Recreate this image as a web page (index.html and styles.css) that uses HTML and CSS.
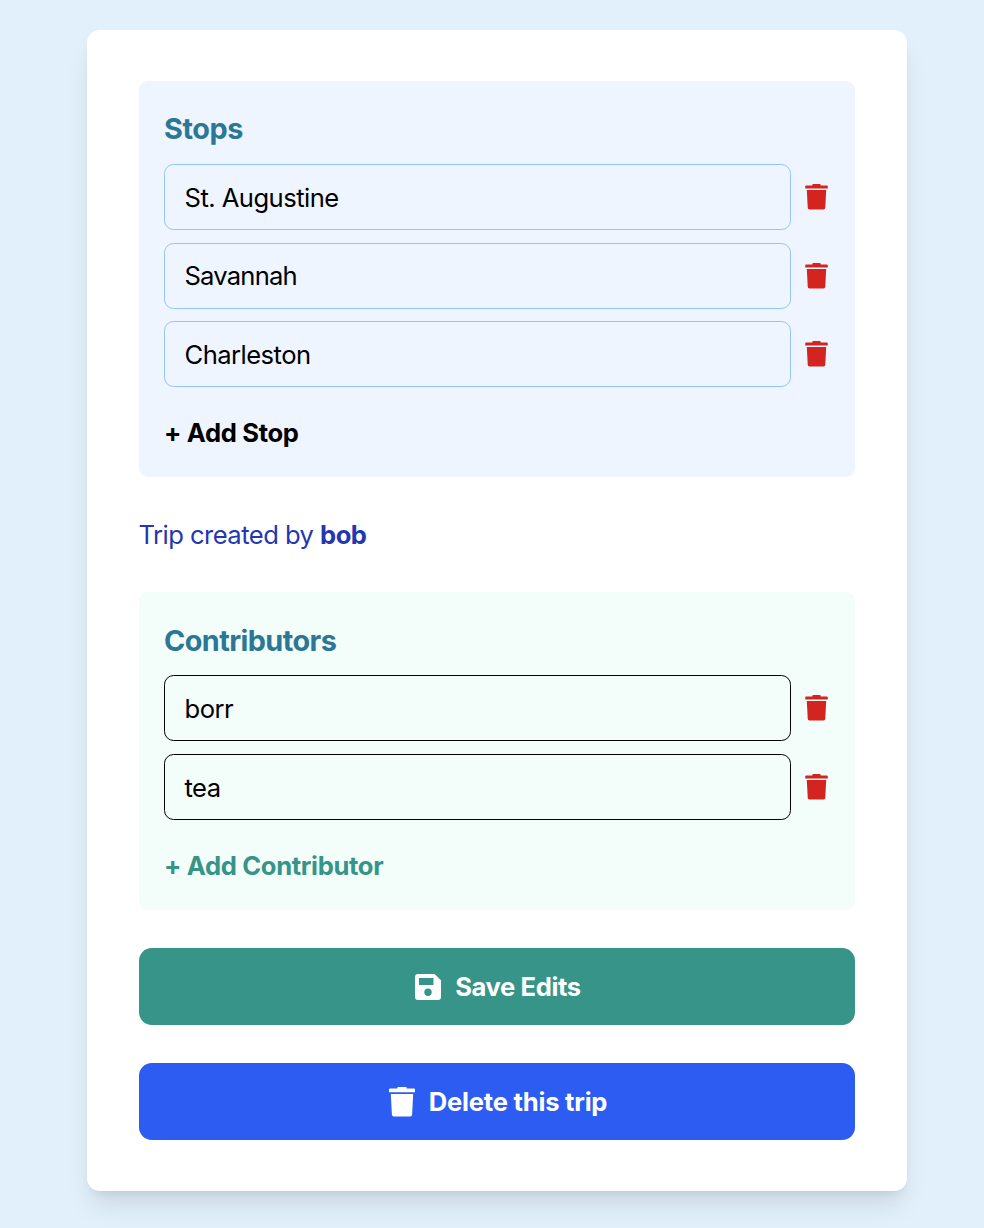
FILE: index.html
```html
<!DOCTYPE html>
<html lang="en">
<head>
<meta charset="utf-8">
<title>Edit trip</title>
<link rel="stylesheet" href="styles.css">
</head>
<body>
<svg class="sprite" aria-hidden="true">
  <symbol id="trash" viewBox="0 0 26 30">
    <path d="M9 0H17Q17.8 0 17.8 1.6H25Q26 1.6 26 2.6V5.2H0V2.6Q0 1.6 1 1.6H8.2Q8.2 0 9 0ZM1.8 6.9H24.2L23.1 27.7Q22.9 29.4 21.2 29.4H4.8Q3.1 29.4 2.9 27.7Z"/>
  </symbol>
  <symbol id="save" viewBox="0 0 26 26">
    <path fill-rule="evenodd" d="M3 0H19.5L26 6.3V23A3 3 0 0 1 23 26H3A3 3 0 0 1 0 23V3A3 3 0 0 1 3 0ZM4 4V11H18.5V4ZM13 14.5A3.7 3.7 0 1 0 13 21.9A3.7 3.7 0 1 0 13 14.5Z"/>
  </symbol>
</svg>
<main class="card">
  <section class="panel stops">
    <h2>Stops</h2>
    <div class="row"><div class="field">St. Augustine</div><svg class="remove"><use href="#trash"/></svg></div>
    <div class="row"><div class="field tight">Savannah</div><svg class="remove"><use href="#trash"/></svg></div>
    <div class="row"><div class="field">Charleston</div><svg class="remove"><use href="#trash"/></svg></div>
    <div class="add"><span>+ Add Stop</span></div>
  </section>
  <p class="creator"><span>Trip created by <b>bob</b></span></p>
  <section class="panel people">
    <h2>Contributors</h2>
    <div class="row"><div class="field">borr</div><svg class="remove"><use href="#trash"/></svg></div>
    <div class="row"><div class="field">tea</div><svg class="remove"><use href="#trash"/></svg></div>
    <div class="add"><span>+ Add Contributor</span></div>
  </section>
  <div class="button save"><svg class="save-icon"><use href="#save"/></svg><span>Save Edits</span></div>
  <div class="button delete"><svg class="delete-icon"><use href="#trash"/></svg><span>Delete this trip</span></div>
</main>
</body>
</html>
```
FILE: styles.css
```css
* { box-sizing: border-box; }
body {
  margin: 0;
  padding: 30px 77px 37px 87px;
  height: 1228px;
  overflow: hidden;
  background: #e2f0fb;
  font-family: Inter, sans-serif;
  font-size: 25.6px;
  line-height: 38.4px;
  letter-spacing: -0.54px;
  color: #000;
}
.sprite { display: none; }
.card {
  height: 1161px;
  padding: 51px 52px;
  background: #fff;
  border-radius: 12.8px;
  box-shadow: 0 18px 27px -5px rgb(0 0 0 / .1), 0 7px 11px -6px rgb(0 0 0 / .1);
}
.panel { padding: 25.6px 25px; border-radius: 9px; }
.stops { height: 396px; background: #eef5fe; }
.people { height: 318px; background: #f3fdfa; }
h2 {
  margin: 0 0 13.4px;
  font-size: 28.8px;
  line-height: 44px;
  font-weight: 650;
  letter-spacing: -0.42px;
  color: #2b7795;
}
.people h2 { line-height: 45px; margin-bottom: 12.4px; letter-spacing: -0.57px; }
.row { display: flex; align-items: center; margin-bottom: 12.7px; }
.field {
  width: 627px;
  height: 66px;
  padding: 14px 19.5px;
  border: 1px solid #95c3fc;
  border-radius: 9.6px;
}
.tight { line-height: 36.4px; letter-spacing: -0.8px; }
.people .field { border-color: #000; }
.remove { width: 23px; height: 26px; margin-left: 14.3px; fill: #d42420; }
.add { padding-top: 14px; font-weight: 650; letter-spacing: -0.34px; }
.people .add { color: #369488; }
.creator { margin: 39px 0 38px; color: #2337ae; }
.creator span { margin-left: -0.5px; }
.creator b { font-weight: 650; }
.button {
  display: flex;
  align-items: center;
  justify-content: center;
  height: 77px;
  margin-top: 38px;
  padding-left: 2px;
  border-radius: 12.8px;
  color: #fff;
  font-weight: 650;
  letter-spacing: -0.4px;
}
.button svg { fill: currentColor; }
.save { background: #369488; }
.delete { background: #2d5cf2; letter-spacing: -0.22px; }
.save-icon { width: 26px; height: 26px; margin-right: 14px; }
.delete-icon { width: 26px; height: 30px; margin-right: 14px; }
```
